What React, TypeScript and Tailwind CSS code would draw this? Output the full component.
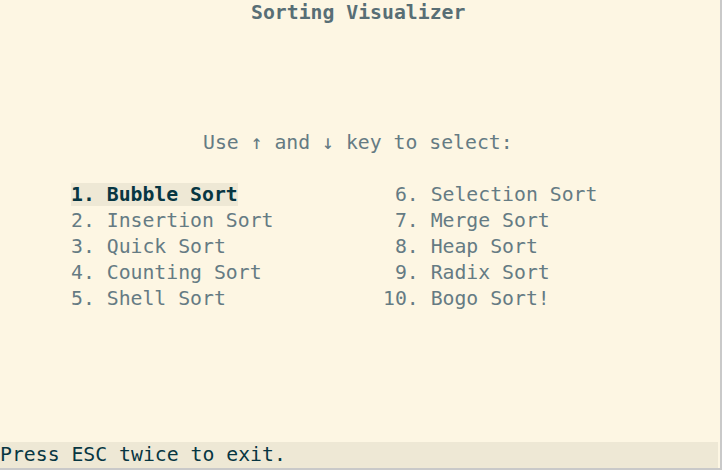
const left = ["Bubble Sort", "Insertion Sort", "Quick Sort", "Counting Sort", "Shell Sort"]
const right = ["Selection Sort", "Merge Sort", "Heap Sort", "Radix Sort", "Bogo Sort!"]

const mono = { fontFamily: '"DejaVu Sans Mono", "Liberation Mono", monospace' }

export default function App() {
  return (
    <div className="flex h-[470px] w-[722px] bg-[#c9c9c9]" style={mono}>
      <div className="flex h-[468px] w-[720px] flex-col bg-[#fdf6e3] text-[19.8px] leading-[26px] text-[#657b83]">
        <div className="pl-[251px] font-bold text-[#586e75]">Sorting Visualizer</div>
        <div className="h-[104px]" />
        <div className="whitespace-pre pl-[203px]">Use ↑ and ↓ key to select:</div>
        <div className="h-[26px]" />
        <div className="flex">
          <div className="flex w-[383px] flex-col pl-[71px]">
            {left.map((name, i) => (
              <div key={name} className="whitespace-pre">
                {i === 0 ? (
                  <span className="bg-[#eee8d5] font-bold text-[#073642]">{`${i + 1}. ${name}`}</span>
                ) : (
                  `${i + 1}. ${name}`
                )}
              </div>
            ))}
          </div>
          <div className="flex flex-col">
            {right.map((name, i) => (
              <div key={name} className="whitespace-pre">
                {`${String(i + 6).padStart(2, " ")}. ${name}`}
              </div>
            ))}
          </div>
        </div>
        <div className="flex-1" />
        <div className="mr-[2px] bg-[#eee8d5] whitespace-pre text-[#073642]">Press ESC twice to exit.</div>
      </div>
    </div>
  )
}
